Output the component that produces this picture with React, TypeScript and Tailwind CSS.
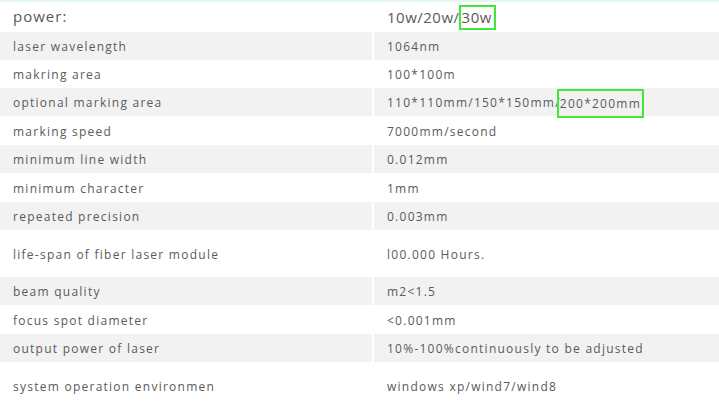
import React from "react";

type Row = { k: string; v: React.ReactNode; h: number; grey: boolean };

const Box = ({ children, cls }: { children: React.ReactNode; cls: string }) => (
  <span className={`border-2 border-[#3fe83a] ${cls}`}>{children}</span>
);

const rows: Row[] = [
  { k: "laser wavelength", v: "1064nm", h: 28, grey: true },
  { k: "makring area", v: "100*100m", h: 28, grey: false },
  {
    k: "optional marking area",
    v: (
      <>
        110*110mm/150*150mm/
        <Box cls="inline-flex items-center h-[29px] -ml-[4px] pl-[1px] pr-[1px] pt-[1px]">200*200mm</Box>
      </>
    ),
    h: 28,
    grey: true,
  },
  { k: "marking speed", v: "7000mm/second", h: 29, grey: false },
  { k: "minimum line width", v: "0.012mm", h: 28, grey: true },
  { k: "minimum character", v: "1mm", h: 29, grey: false },
  { k: "repeated precision", v: "0.003mm", h: 28, grey: true },
  { k: "life-span of fiber laser module", v: "l00.000 Hours.", h: 47, grey: false },
  { k: "beam quality", v: "m2<1.5", h: 28, grey: true },
  { k: "focus spot diameter", v: "<0.001mm", h: 29, grey: false },
  { k: "output power of laser", v: "10%-100%continuously to be adjusted", h: 28, grey: true },
  { k: "system operation environmen", v: "windows xp/wind7/wind8", h: 48, grey: false },
];

export default function App() {
  return (
    <div
      className="w-[719px] h-[407px] overflow-hidden bg-white text-[#5a5a5a]"
      style={{ fontFamily: '"Open Sans", "Noto Sans", sans-serif' }}
    >
      <div className="h-[2px] bg-[#e3f6ef]" />
      <div className="flex h-[30px] items-center">
        <div className="w-[373px] pl-[13px] text-[15px] tracking-[1px] leading-none pb-[1px]">power:</div>
        <div className="flex-1 pl-[14px] text-[15px] tracking-[0.5px] leading-none flex items-center">
          10w/20w/
          <Box cls="inline-flex items-center h-[25px] -ml-[1px] pl-[1px] pr-[2px]">30w</Box>
        </div>
      </div>
      {rows.map((r, i) => (
        <div key={i} className="flex items-center" style={{ height: r.h }}>
          <div
            className={`w-[372px] h-full flex items-center pl-[13px] pt-[2px] text-[12px] tracking-[1.25px] ${
              r.grey ? "bg-[#f2f2f2]" : ""
            }`}
          >
            {r.k}
          </div>
          <div className="w-[2px] h-full" />
          <div
            className={`flex-1 h-full flex items-center pl-[13px] pt-[2px] text-[12px] tracking-[1.25px] ${
              r.grey ? "bg-[#f2f2f2]" : ""
            }`}
          >
            {r.v}
          </div>
        </div>
      ))}
    </div>
  );
}
